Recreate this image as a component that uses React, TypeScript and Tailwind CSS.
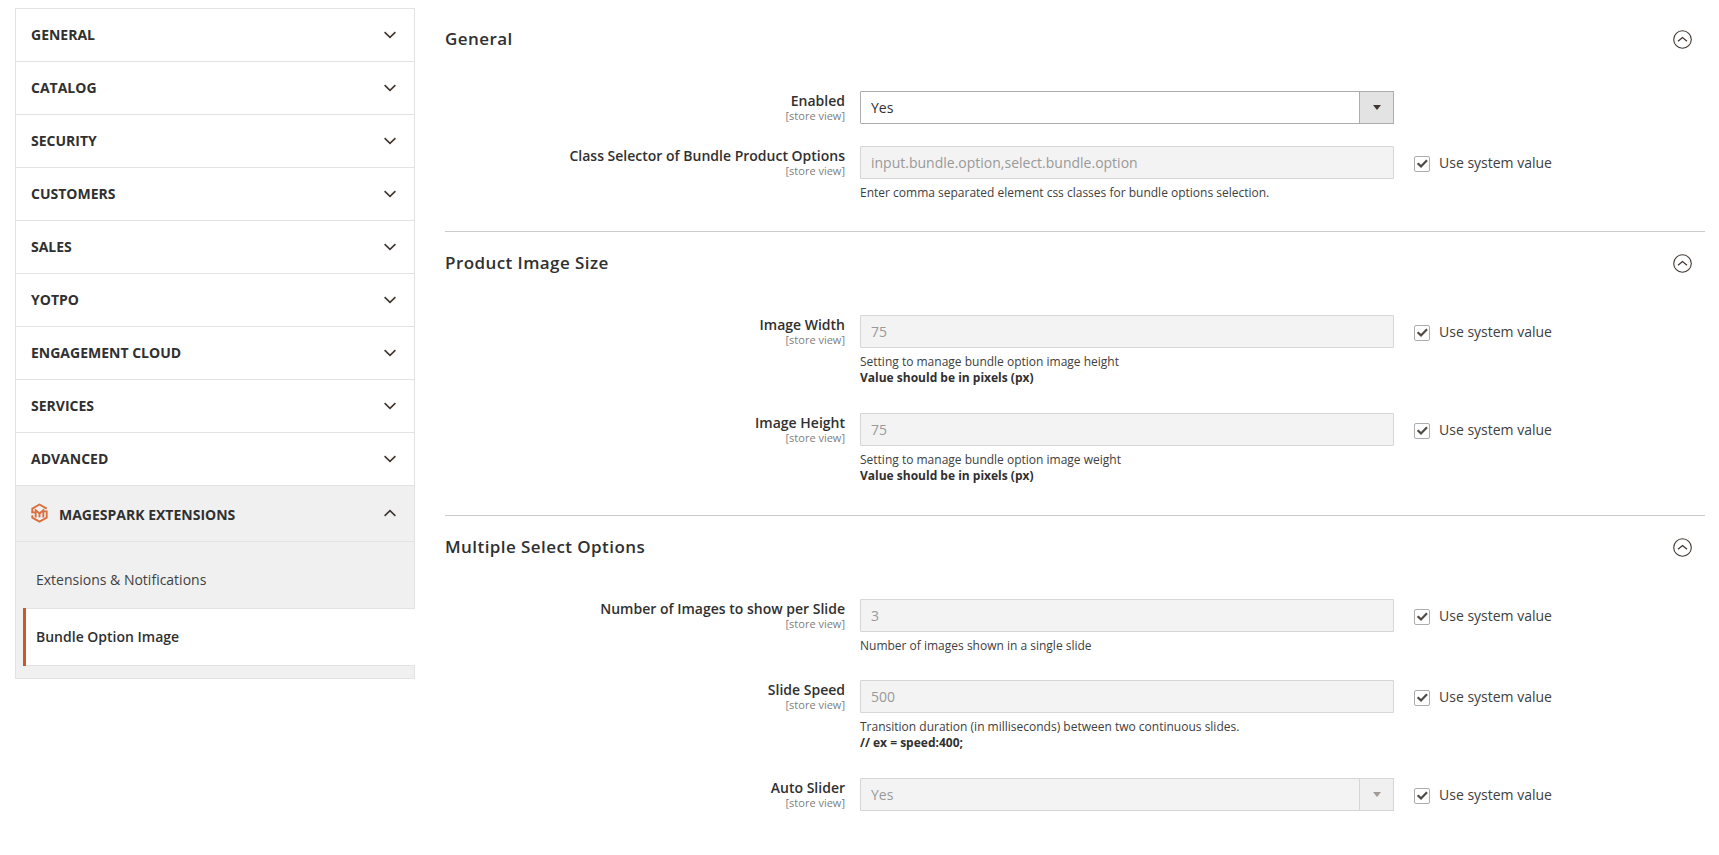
import { useState } from "react";
import type { ReactNode } from "react";

type Field = {
  id: string;
  label: string;
  value: string;
  type?: "select" | "text";
  inherit?: boolean;
  note?: string;
  noteStrong?: string;
};

type Section = {
  title: string;
  fields: Field[];
};

const tabs = [
  "General",
  "Catalog",
  "Security",
  "Customers",
  "Sales",
  "Yotpo",
  "Engagement Cloud",
  "Services",
  "Advanced",
];

const sections: Section[] = [
  {
    title: "General",
    fields: [
      { id: "enabled", label: "Enabled", value: "Yes", type: "select" },
      {
        id: "class_selector",
        label: "Class Selector of Bundle Product Options",
        value: "input.bundle.option,select.bundle.option",
        inherit: true,
        note: "Enter comma separated element css classes for bundle options selection.",
      },
    ],
  },
  {
    title: "Product Image Size",
    fields: [
      {
        id: "image_width",
        label: "Image Width",
        value: "75",
        inherit: true,
        note: "Setting to manage bundle option image height",
        noteStrong: "Value should be in pixels (px)",
      },
      {
        id: "image_height",
        label: "Image Height",
        value: "75",
        inherit: true,
        note: "Setting to manage bundle option image weight",
        noteStrong: "Value should be in pixels (px)",
      },
    ],
  },
  {
    title: "Multiple Select Options",
    fields: [
      {
        id: "images_per_slide",
        label: "Number of Images to show per Slide",
        value: "3",
        inherit: true,
        note: "Number of images shown in a single slide",
      },
      {
        id: "slide_speed",
        label: "Slide Speed",
        value: "500",
        inherit: true,
        note: "Transition duration (in milliseconds) between two continuous slides.",
        noteStrong: "// ex = speed:400;",
      },
      {
        id: "auto_slider",
        label: "Auto Slider",
        value: "Yes",
        type: "select",
        inherit: true,
      },
    ],
  },
];

function Chevron({ up = false }: { up?: boolean }) {
  return (
    <svg width="12" height="8" viewBox="0 0 12 8" fill="none" stroke="#41362f" strokeWidth="1.6">
      <path d={up ? "M0.6 6.8 6 1.6l5.4 5.2" : "M0.6 1.2 6 6.4l5.4-5.2"} />
    </svg>
  );
}

function MagesparkLogo() {
  return (
    <svg width="17" height="20" viewBox="0 0 17 20" fill="none" stroke="#d9703f" strokeWidth="1.9">
      <path d="M1.3 9.6V5.6l7.2-4.1 7.2 4.1" />
      <path d="M0.4 9.4h4.3" />
      <path d="M4.7 14.6V7.2l3.8 3.2 3.8-3.2v7.4" />
      <path d="M8.5 10v4.4" />
      <path d="M12.3 8.4h3.4v6.2l-7.2 4-7.2-4v-2.4" />
    </svg>
  );
}

function SectionBlock({ title, children }: { title: string; children: ReactNode }) {
  const [open, setOpen] = useState(true);

  return (
    <section className="border-b border-[#cccccc] pb-1 last:border-b-0">
      <button
        type="button"
        onClick={() => setOpen(!open)}
        className="flex w-full items-center justify-between pt-[19px] pr-[13px] text-left"
      >
        <h2 className="text-[17px] leading-6 font-semibold tracking-wide">{title}</h2>
        <svg width="19" height="19" viewBox="0 0 19 19" fill="none" stroke="#41362f">
          <circle cx="9.5" cy="9.5" r="8.8" strokeWidth="1.1" />
          <path d="M5 11.2 9.5 7.6l4.5 3.6" strokeWidth="1.3" />
        </svg>
      </button>
      {open && <div className="pt-10">{children}</div>}
    </section>
  );
}

function FieldRow({ field }: { field: Field }) {
  const [inherit, setInherit] = useState(!!field.inherit);
  const [value, setValue] = useState(field.value);

  return (
    <div className="grid grid-cols-[415fr_534fr_311fr] pb-[22px]">
      <label htmlFor={field.id} className="pr-[15px] text-right">
        <span className="block text-sm leading-5 font-semibold">{field.label}</span>
        <span className="block text-[11px] leading-[9px] text-[#808080]">[store view]</span>
      </label>

      <div>
        {field.type === "select" ? (
          <div className="relative">
            <select
              id={field.id}
              value={value}
              disabled={inherit}
              onChange={(e) => setValue(e.target.value)}
              className="block h-[33px] w-full appearance-none rounded-[1px] border border-[#adadad] bg-white pr-10 pl-[10px] text-sm disabled:border-[#d6d6d6] disabled:bg-[#f3f3f3] disabled:text-[#999999] disabled:opacity-100"
            >
              <option>Yes</option>
              <option>No</option>
            </select>
            <span
              className={
                inherit
                  ? "pointer-events-none absolute inset-y-0 right-0 flex w-[35px] items-center justify-center border border-[#d6d6d6] bg-[#f0f0f0] text-[#a09b97]"
                  : "pointer-events-none absolute inset-y-0 right-0 flex w-[35px] items-center justify-center border border-[#adadad] bg-[#e3e3e3] text-[#41362f]"
              }
            >
              <svg width="8" height="5" viewBox="0 0 8 5" fill="currentColor">
                <path d="M0 0h8L4 5z" />
              </svg>
            </span>
          </div>
        ) : (
          <input
            id={field.id}
            type="text"
            value={value}
            disabled={inherit}
            onChange={(e) => setValue(e.target.value)}
            className="block h-[33px] w-full rounded-[1px] border border-[#adadad] bg-white px-[10px] text-sm disabled:border-[#d6d6d6] disabled:bg-[#f3f3f3] disabled:text-[#999999]"
          />
        )}
        {field.note && (
          <p className="pt-1.5 pb-1 text-xs leading-4 text-[#404040]">
            {field.note}
            {field.noteStrong && (
              <strong className="block pb-px font-bold text-[#303030]">{field.noteStrong}</strong>
            )}
          </p>
        )}
      </div>

      {field.inherit && (
        <label className="flex h-[33px] items-center pl-5 text-sm text-[#404040]">
          <span className="relative mt-[3px] mr-[9px] size-4">
            <input
              type="checkbox"
              checked={inherit}
              onChange={(e) => setInherit(e.target.checked)}
              className="block size-4 appearance-none rounded-xs border border-[#adadad] bg-white"
            />
            {inherit && (
              <svg
                className="pointer-events-none absolute inset-0"
                width="16"
                height="16"
                viewBox="0 0 16 16"
                fill="none"
                stroke="#514943"
                strokeWidth="2.2"
              >
                <path d="M3.6 7.2 7 10.4l6-6.2" />
              </svg>
            )}
          </span>
          Use system value
        </label>
      )}
    </div>
  );
}

export default function App() {
  return (
    <div className="flex min-h-screen items-start gap-[30px] bg-white pt-2 pr-3.5 pl-[15px] font-['Open_Sans','Noto_Sans',sans-serif] text-[#303030]">
      <nav className="w-[400px] shrink-0 border-t border-[#e3e3e3]">
        {tabs.map((tab) => (
          <button
            key={tab}
            type="button"
            className="flex h-[53px] w-full items-center justify-between border-x border-b border-[#e3e3e3] pr-[18px] pb-px pl-[15px] text-sm font-bold uppercase"
          >
            {tab}
            <Chevron />
          </button>
        ))}

        <button
          type="button"
          className="flex h-14 w-full items-center border-x border-b border-[#e3e3e3] bg-[#f0f0f0] pr-[18px] pb-0.5 pl-[15px] text-sm font-bold uppercase"
        >
          <MagesparkLogo />
          <span className="flex-1 pt-1 pl-[11px] text-left">Magespark Extensions</span>
          <Chevron up />
        </button>

        <ul className="border-b border-l border-[#e3e3e3] bg-[#f0f0f0] text-sm">
          <li className="border-r border-[#e3e3e3] pt-2.5">
            <a href="#notifications" className="block py-[18px] pl-5 leading-5 text-[#404040]">
              Extensions &amp; Notifications
            </a>
          </li>
          <li className="pl-[7px]">
            <a
              href="#bundle-option-image"
              className="flex bg-white font-semibold"
              aria-current="page"
            >
              <span className="w-[3px] bg-[#ca5b26]" />
              <span className="flex-1 border-y border-[#e3e3e3] py-[18px] pl-2.5 leading-5">
                Bundle Option Image
              </span>
            </a>
          </li>
          <li className="h-3 border-r border-[#e3e3e3]" />
        </ul>
      </nav>

      <main className="min-w-0 flex-1">
        {sections.map((section) => (
          <SectionBlock key={section.title} title={section.title}>
            {section.fields.map((field) => (
              <FieldRow key={field.id} field={field} />
            ))}
          </SectionBlock>
        ))}
      </main>
    </div>
  );
}
